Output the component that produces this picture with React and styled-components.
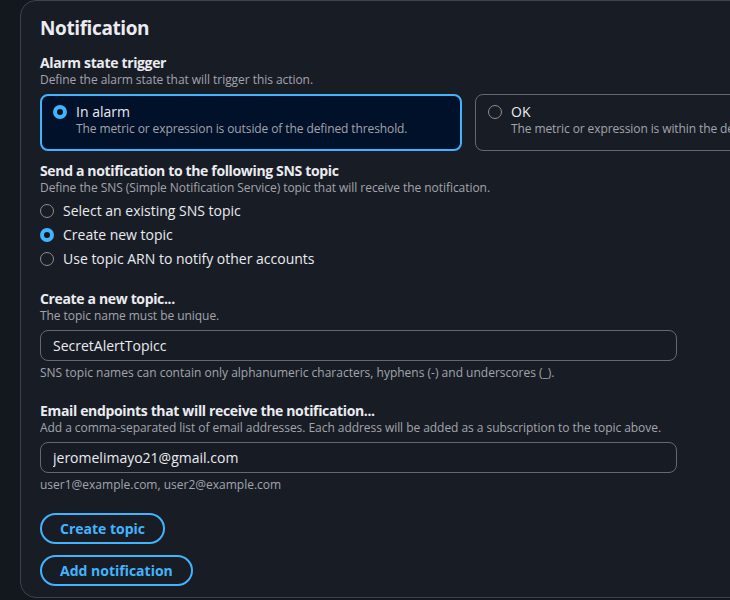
import React, { useState } from "react";
import styled, { createGlobalStyle } from "styled-components";

const GlobalStyle = createGlobalStyle`
  html, body {
    margin: 0;
    padding: 0;
    background: #13171e;
    font-family: "Open Sans", "Noto Sans", sans-serif;
    color: #c6c6cd;
  }
`;

export default function App() {
  const [alarmState, setAlarmState] = useState("alarm");
  const [topicMode, setTopicMode] = useState("new");
  const [topicName, setTopicName] = useState("SecretAlertTopicc");
  const [emails, setEmails] = useState("jeromelimayo21@gmail.com");

  const topicOptions = [
    { id: "existing", label: "Select an existing SNS topic" },
    { id: "new", label: "Create new topic" },
    { id: "arn", label: "Use topic ARN to notify other accounts" },
  ];

  return (
    <>
      <GlobalStyle />
      <Page>
        <Card>
          <Title>Notification</Title>

          <Field $space={12}>
            <Label>Alarm state trigger</Label>
            <Description>Define the alarm state that will trigger this action.</Description>
            <TileRow>
              <Tile $selected={alarmState === "alarm"} onClick={() => setAlarmState("alarm")}>
                <Radio $checked={alarmState === "alarm"} />
                <TileText>
                  <TileLabel>In alarm</TileLabel>
                  <TileDesc>The metric or expression is outside of the defined threshold.</TileDesc>
                </TileText>
              </Tile>
              <Tile $selected={alarmState === "ok"} onClick={() => setAlarmState("ok")}>
                <Radio $checked={alarmState === "ok"} />
                <TileText>
                  <TileLabel>OK</TileLabel>
                  <TileDesc>The metric or expression is within the defined threshold.</TileDesc>
                </TileText>
              </Tile>
            </TileRow>
          </Field>

          <Field $space={11}>
            <Label>Send a notification to the following SNS topic</Label>
            <Description>
              Define the SNS (Simple Notification Service) topic that will receive the notification.
            </Description>
            <RadioGroup>
              {topicOptions.map((opt) => (
                <RadioRow key={opt.id} onClick={() => setTopicMode(opt.id)}>
                  <Radio $checked={topicMode === opt.id} />
                  <span>{opt.label}</span>
                </RadioRow>
              ))}
            </RadioGroup>
          </Field>

          <Field $space={22}>
            <Label>Create a new topic...</Label>
            <Description>The topic name must be unique.</Description>
            <Input value={topicName} onChange={(e) => setTopicName(e.target.value)} />
            <Hint>SNS topic names can contain only alphanumeric characters, hyphens (-) and underscores (_).</Hint>
          </Field>

          <Field $space={21}>
            <Label>Email endpoints that will receive the notification...</Label>
            <Description>
              Add a comma-separated list of email addresses. Each address will be added as a subscription to the topic above.
            </Description>
            <Input value={emails} onChange={(e) => setEmails(e.target.value)} />
            <Hint>user1@example.com, user2@example.com</Hint>
          </Field>

          <Buttons>
            <OutlineButton>Create topic</OutlineButton>
            <OutlineButton>Add notification</OutlineButton>
          </Buttons>
        </Card>
      </Page>
    </>
  );
}

const Page = styled.div`
  width: 730px;
  height: 600px;
  overflow: hidden;
  padding-left: 20px;
  box-sizing: border-box;
`;

const Card = styled.div`
  width: 760px;
  height: 598px;
  box-sizing: border-box;
  background: #181d25;
  border: 1px solid #3e424a;
  border-radius: 16px;
  padding: 13px 19px 0;
  display: flex;
  flex-direction: column;
`;

const Title = styled.h2`
  margin: 0;
  font-size: 19px;
  font-weight: 700;
  line-height: 28px;
  letter-spacing: -0.4px;
  color: #ebebf0;
`;

const Field = styled.div`
  display: flex;
  flex-direction: column;
  margin-top: ${(p) => p.$space || 0}px;
`;

const Label = styled.div`
  font-size: 14px;
  font-weight: 700;
  line-height: 18px;
  letter-spacing: -0.35px;
  color: #ebebf0;
`;

const Description = styled.div`
  font-size: 12px;
  line-height: 16px;
  letter-spacing: -0.05px;
  color: #a4a4ad;
  white-space: nowrap;
`;

const TileRow = styled.div`
  display: flex;
  gap: 13px;
  margin-top: 6px;
`;

const Tile = styled.div`
  width: 422px;
  height: 57px;
  box-sizing: border-box;
  flex-shrink: 0;
  display: flex;
  align-items: flex-start;
  gap: 9px;
  padding: ${(p) => (p.$selected ? "7px 11px" : "8px 12px")};
  border: ${(p) => (p.$selected ? "2px solid #42b4ff" : "1px solid #656871")};
  background: ${(p) => (p.$selected ? "#001129" : "transparent")};
  border-radius: 8px;
  cursor: pointer;
`;

const TileText = styled.div`
  display: flex;
  flex-direction: column;
  white-space: nowrap;
`;

const TileLabel = styled.div`
  font-size: 14px;
  line-height: 18px;
  color: #ebebf0;
`;

const TileDesc = styled.div`
  font-size: 12px;
  line-height: 16px;
  letter-spacing: -0.1px;
  color: #a4a4ad;
`;

const Radio = styled.span`
  width: 14px;
  height: 14px;
  margin-top: 2px;
  flex-shrink: 0;
  box-sizing: border-box;
  border-radius: 50%;
  border: ${(p) => (p.$checked ? "4px solid #42b4ff" : "1.5px solid #8c8c94")};
  background: ${(p) => (p.$checked ? "#0f141a" : "transparent")};
`;

const RadioGroup = styled.div`
  display: flex;
  flex-direction: column;
  gap: 6px;
  margin-top: 6px;
`;

const RadioRow = styled.label`
  display: flex;
  align-items: center;
  gap: 9px;
  font-size: 14px;
  line-height: 18px;
  color: #ebebf0;
  cursor: pointer;

  ${Radio} {
    margin-top: 0;
  }
`;

const Input = styled.input`
  width: 637px;
  height: 31px;
  box-sizing: border-box;
  margin-top: 6px;
  padding: 0 12px;
  background: #171c24;
  border: 1px solid #656871;
  border-radius: 8px;
  color: #ebebf0;
  font-family: inherit;
  font-size: 14px;
  outline: none;
`;

const Hint = styled.div`
  margin-top: 4px;
  font-size: 12px;
  line-height: 16px;
  color: #a4a4ad;
`;

const Buttons = styled.div`
  display: flex;
  flex-direction: column;
  align-items: flex-start;
  gap: 11px;
  margin-top: 20px;
`;

const OutlineButton = styled.button`
  height: 31px;
  padding: 0 18px;
  background: transparent;
  border: 2px solid #42b4ff;
  border-radius: 16px;
  color: #42b4ff;
  font-family: inherit;
  font-size: 14px;
  font-weight: 700;
  cursor: pointer;
`;
